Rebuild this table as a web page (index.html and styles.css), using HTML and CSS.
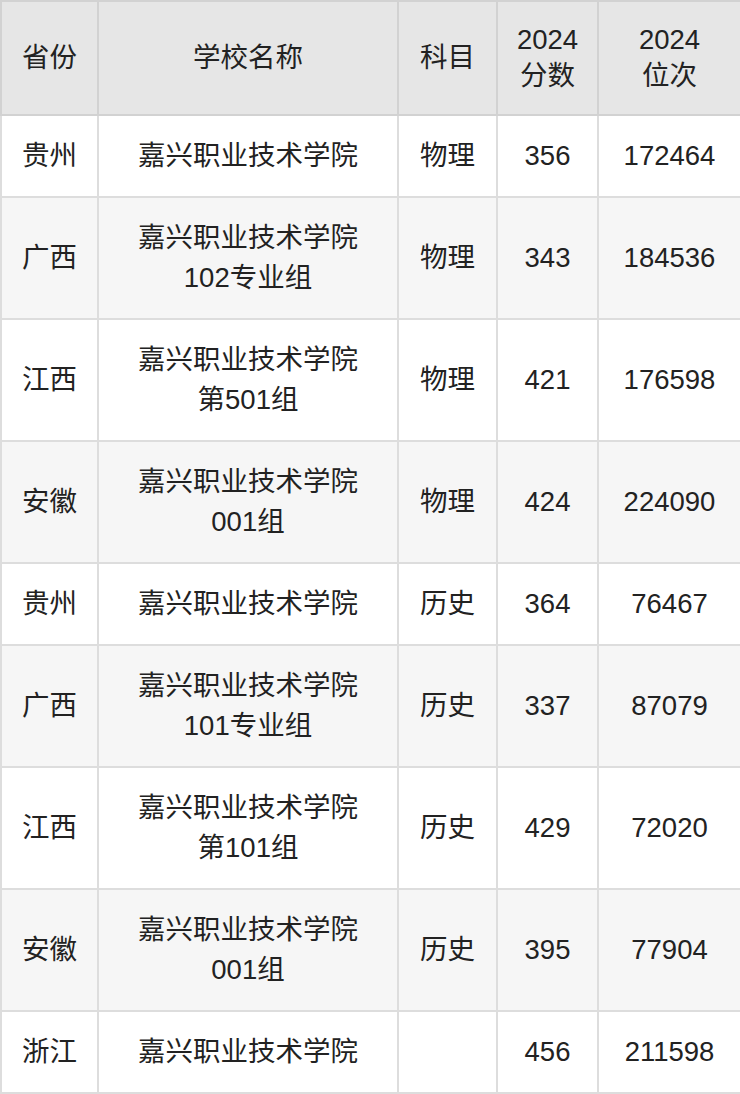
FILE: index.html
```html
<!DOCTYPE html>
<html lang="zh">
<head>
<meta charset="utf-8">
<link rel="stylesheet" href="styles.css">
</head>
<body>
<table class="tbl">
  <colgroup>
    <col class="c1"><col class="c2"><col class="c3"><col class="c4"><col class="c5">
  </colgroup>
  <thead>
    <tr><th>省份</th><th>学校名称</th><th>科目</th><th>2024<br>分数</th><th>2024<br>位次</th></tr>
  </thead>
  <tbody>
    <tr><td>贵州</td><td>嘉兴职业技术学院</td><td>物理</td><td>356</td><td>172464</td></tr>
    <tr><td>广西</td><td>嘉兴职业技术学院<br>102专业组</td><td>物理</td><td>343</td><td>184536</td></tr>
    <tr><td>江西</td><td>嘉兴职业技术学院<br>第501组</td><td>物理</td><td>421</td><td>176598</td></tr>
    <tr><td>安徽</td><td>嘉兴职业技术学院<br>001组</td><td>物理</td><td>424</td><td>224090</td></tr>
    <tr><td>贵州</td><td>嘉兴职业技术学院</td><td>历史</td><td>364</td><td>76467</td></tr>
    <tr><td>广西</td><td>嘉兴职业技术学院<br>101专业组</td><td>历史</td><td>337</td><td>87079</td></tr>
    <tr><td>江西</td><td>嘉兴职业技术学院<br>第101组</td><td>历史</td><td>429</td><td>72020</td></tr>
    <tr><td>安徽</td><td>嘉兴职业技术学院<br>001组</td><td>历史</td><td>395</td><td>77904</td></tr>
    <tr><td>浙江</td><td>嘉兴职业技术学院</td><td></td><td>456</td><td>211598</td></tr>
  </tbody>
</table>
</body>
</html>
```

FILE: styles.css
```css
html, body {
  margin: 0;
  padding: 0;
  background: #ffffff;
}
.tbl {
  width: 740px;
  border-collapse: collapse;
  table-layout: fixed;
  font-family: "Liberation Sans", "Noto Sans CJK SC", sans-serif;
  font-size: 27.5px;
  color: #222222;
}
.c1 { width: 97px; }
.c2 { width: 300px; }
.c3 { width: 99px; }
.c4 { width: 101px; }
.c5 { width: 143px; }
.tbl th, .tbl td {
  border: 2px solid #dddddd;
  text-align: center;
  vertical-align: middle;
  padding: 20px 2px;
  line-height: 40px;
}
.tbl th {
  font-weight: normal;
  background: #e6e6e6;
  border-color: #d2d2d2;
  line-height: 36px;
  padding: 20px 2px 20px;
}
.tbl tbody tr:nth-child(even) td {
  background: #f6f6f6;
}
```
